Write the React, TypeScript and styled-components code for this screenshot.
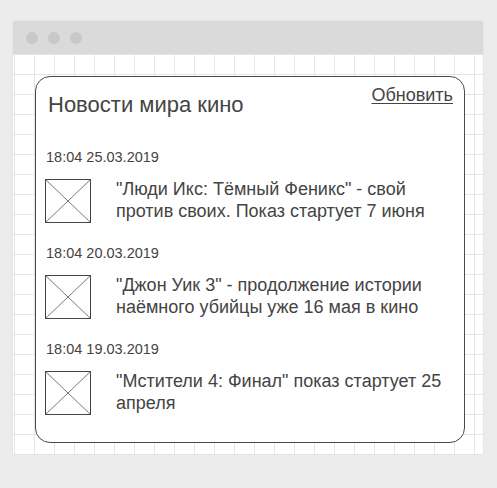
import React from "react";
import styled, { createGlobalStyle } from "styled-components";

const Global = createGlobalStyle`
  html, body { margin: 0; padding: 0; }
  body {
    background: #ececec;
    font-family: "Liberation Sans", Arial, sans-serif;
    color: #444;
  }
`;

const Page = styled.div`
  padding: 21px 0 0 13px;
  height: 488px;
  box-sizing: border-box;
`;

const Window = styled.div`
  width: 470px;
  height: 433px;
  display: flex;
  flex-direction: column;
  border-radius: 3px 3px 0 0;
  overflow: hidden;
  box-shadow: 0 0 0 1px rgba(0, 0, 0, 0.03);
`;

const TitleBar = styled.div`
  height: 33px;
  flex: none;
  background: #dadada;
  display: flex;
  align-items: center;
  gap: 10px;
  padding-left: 13px;
`;

const Dot = styled.span`
  width: 12px;
  height: 12px;
  border-radius: 50%;
  background: #c8c8c8;
`;

const Canvas = styled.div`
  flex: 1;
  background-color: #fff;
  background-image: linear-gradient(to right, #e6e6e6 1px, transparent 1px),
    linear-gradient(to bottom, #e6e6e6 1px, transparent 1px);
  background-size: 20px 20px;
  background-position: 1px 0;
  padding: 22px 0 0 22px;
`;

const Card = styled.div`
  width: 430px;
  height: 367px;
  box-sizing: border-box;
  background: #fff;
  border: 1px solid #4a4a4a;
  border-radius: 15px;
  padding: 8px 11px 0 9px;
`;

const Header = styled.div`
  display: flex;
  justify-content: space-between;
  align-items: flex-start;
`;

const Title = styled.h1`
  margin: 7px 0 0 3px;
  font-size: 22px;
  line-height: 26px;
  font-weight: normal;
  color: #444;
`;

const Refresh = styled.a`
  font-size: 18px;
  line-height: 21px;
  color: #444;
  text-decoration: underline;
  text-underline-offset: 2px;
`;

const List = styled.div`
  display: flex;
  flex-direction: column;
  margin-top: 31px;
  gap: 22px;
`;

const Item = styled.div`
  display: flex;
  flex-direction: column;
  gap: 13px;
`;

const Date = styled.div`
  font-size: 14.5px;
  line-height: 16px;
  color: #444;
  margin-left: 1px;
`;

const Row = styled.div`
  display: flex;
  align-items: flex-start;
  gap: 25px;
`;

const Thumb = styled.svg`
  flex: none;
  width: 46px;
  height: 44px;
  margin-top: 1px;
`;

const Text = styled.div`
  font-size: 18px;
  line-height: 22px;
  color: #444;
  max-width: 336px;
`;

const Placeholder = () => (
  <Thumb viewBox="0 0 46 44">
    <rect x="0.5" y="0.5" width="45" height="43" fill="#fff" stroke="#444" />
    <line x1="0.5" y1="0.5" x2="45.5" y2="43.5" stroke="#555" strokeWidth="0.8" />
    <line x1="45.5" y1="0.5" x2="0.5" y2="43.5" stroke="#555" strokeWidth="0.8" />
  </Thumb>
);

const news = [
  { date: "18:04 25.03.2019", text: "\"Люди Икс: Тёмный Феникс\" - свой против своих. Показ стартует 7 июня" },
  { date: "18:04 20.03.2019", text: "\"Джон Уик 3\" - продолжение истории наёмного убийцы уже 16 мая в кино" },
  { date: "18:04 19.03.2019", text: "\"Мстители 4: Финал\" показ стартует 25 апреля" },
];

export default function App() {
  return (
    <>
      <Global />
      <Page>
        <Window>
          <TitleBar>
            <Dot />
            <Dot />
            <Dot />
          </TitleBar>
          <Canvas>
            <Card>
              <Header>
                <Title>Новости мира кино</Title>
                <Refresh>Обновить</Refresh>
              </Header>
              <List>
                {news.map((n) => (
                  <Item key={n.date}>
                    <Date>{n.date}</Date>
                    <Row>
                      <Placeholder />
                      <Text>{n.text}</Text>
                    </Row>
                  </Item>
                ))}
              </List>
            </Card>
          </Canvas>
        </Window>
      </Page>
    </>
  );
}
